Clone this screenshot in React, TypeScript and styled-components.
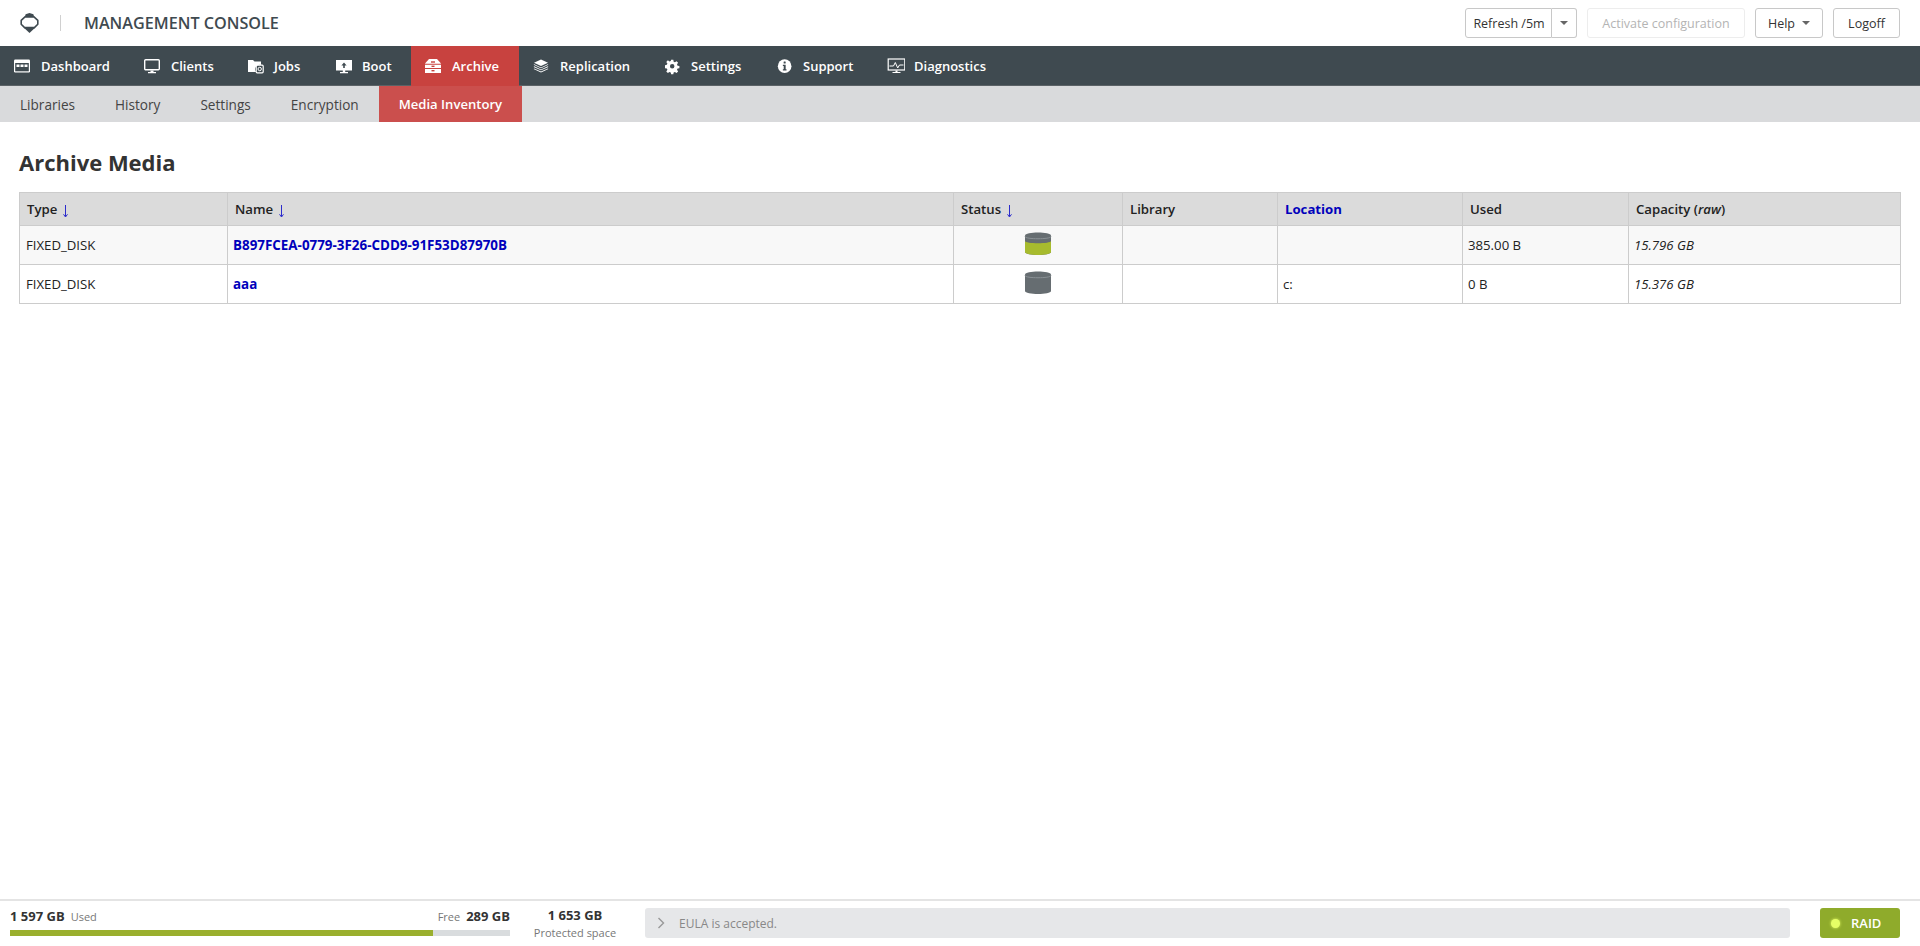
import React from "react";
import styled, { createGlobalStyle } from "styled-components";

const Global = createGlobalStyle`
  html, body { margin: 0; padding: 0; height: 100%; background: #fff; }
  #root { height: 100%; }
  * { box-sizing: border-box; }
`;

const Page = styled.div`
  height: 946px;
  display: flex;
  flex-direction: column;
  font-family: "Open Sans", "Liberation Sans", sans-serif;
  color: #333;
  overflow: hidden;
`;

const TopBar = styled.header`
  height: 46px;
  flex: none;
  display: flex;
  align-items: center;
  justify-content: space-between;
  padding: 0 20px 0 20px;
  background: #fff;
`;

const Brand = styled.div`
  display: flex;
  align-items: center;
`;

const Divider = styled.span`
  width: 1px;
  height: 16px;
  background: #d0d0d0;
  margin: 0 23px 0 21px;
`;

const Title = styled.span`
  font-size: 16.2px;
  font-weight: 600;
  color: #3f4a50;
  white-space: nowrap;
`;

const Actions = styled.div`
  display: flex;
  gap: 10px;
`;

const Button = styled.button<{ $disabled?: boolean; $w?: number }>`
  width: ${(p) => (p.$w ? `${p.$w}px` : "auto")};
  height: 30px;
  display: flex;
  align-items: center;
  justify-content: center;
  gap: 7px;
  padding: 0;
  background: #fff;
  border: 1px solid ${(p) => (p.$disabled ? "#ededed" : "#c8c8c8")};
  border-radius: 3px;
  font: 400 12.5px "Open Sans", sans-serif;
  color: ${(p) => (p.$disabled ? "#b4b4b4" : "#333")};
  white-space: nowrap;
`;

const SplitGroup = styled.div`
  display: flex;
`;

const SplitMain = styled(Button)`
  padding-left: 1px;
  border-radius: 3px 0 0 3px;
  border-right: 1px solid #c8c8c8;
`;

const SplitCaret = styled(Button)`
  border-left: 0;
  border-radius: 0 3px 3px 0;
`;

const Caret = styled.i`
  display: block;
  width: 0;
  height: 0;
  border-left: 4px solid transparent;
  border-right: 4px solid transparent;
  border-top: 4px solid #666;
`;

const MainNav = styled.nav`
  height: 40px;
  flex: none;
  display: flex;
  background: #3f4a50;
  box-shadow: inset 0 -1px 0 #5b6266;
`;

const NavItem = styled.a<{ $active?: boolean; $w: number }>`
  width: ${(p) => p.$w}px;
  flex: none;
  display: flex;
  align-items: center;
  padding-left: 14px;
  background: ${(p) => (p.$active ? "#c8423f" : "transparent")};
  color: #fff;
  font-size: 13px;
  font-weight: 600;
  white-space: nowrap;
`;

const NavIcon = styled.svg`
  width: 18px;
  height: 18px;
  flex: none;
  fill: none;
  margin-right: 9px;
`;

const SubNav = styled.nav`
  height: 36px;
  flex: none;
  display: flex;
  background: #d9dadc;
`;

const SubItem = styled.a<{ $active?: boolean }>`
  display: flex;
  align-items: center;
  padding: 0 20px;
  background: ${(p) => (p.$active ? "#cb4f4d" : "transparent")};
  color: ${(p) => (p.$active ? "#fff" : "#444")};
  font-size: ${(p) => (p.$active ? 13.1 : 13.6)}px;
  font-weight: ${(p) => (p.$active ? 600 : 400)};
  white-space: nowrap;
`;

const Main = styled.main`
  flex: 1;
  padding: 26px 19px 0;
`;

const Heading = styled.h1`
  margin: 0 0 16px;
  font-size: 22px;
  line-height: 28px;
  font-weight: 700;
  color: #333;
`;

const Table = styled.table`
  width: 1882px;
  border-collapse: collapse;
  table-layout: fixed;
  font-size: 13.2px;
  color: #222;
  border: 1px solid #ccc;
`;

const Th = styled.th`
  height: 33px;
  padding: 0 7px;
  background: #dbdbdb;
  border: 1px solid #ccc;
  text-align: left;
  font-weight: 600;
  color: #222;
`;

const ThLink = styled.span`
  color: #0000bb;
  font-weight: 700;
`;

const SortArrow = styled.svg`
  display: inline-block;
  width: 7px;
  height: 14px;
  margin-left: 1px;
  vertical-align: -4px;
`;

const Tr = styled.tr<{ $shade?: boolean }>`
  background: ${(p) => (p.$shade ? "#f8f8f8" : "#fff")};
`;

const Td = styled.td<{ $center?: boolean; $italic?: boolean }>`
  height: 39px;
  padding: 0 5px;
  border: 1px solid #ccc;
  text-align: ${(p) => (p.$center ? "center" : "left")};
  font-style: ${(p) => (p.$italic ? "italic" : "normal")};
  vertical-align: middle;
  &:first-child {
    padding-left: 6px;
  }
`;

const NameLink = styled.a`
  color: #0000bb;
  font-weight: 700;
  font-size: 13.4px;
`;

const DiskSvg = styled.svg`
  display: block;
  margin: -3px auto 0;
  width: 28px;
  height: 24px;
`;

const Footer = styled.footer`
  height: 47px;
  flex: none;
  display: flex;
  align-items: stretch;
  padding: 0 19px 0 10px;
  border-top: 2px solid #e4e4e4;
  background: #fff;
`;

const Usage = styled.div`
  width: 500px;
  flex: none;
  display: flex;
  flex-direction: column;
  margin-right: 15px;
`;

const UsageRow = styled.div`
  height: 29px;
  display: flex;
  align-items: center;
  justify-content: space-between;
`;

const UsagePart = styled.span`
  display: flex;
  align-items: baseline;
  gap: 6px;
`;

const Strong = styled.b`
  font-size: 13px;
  font-weight: 700;
  color: #333;
`;

const Muted = styled.span`
  font-size: 11px;
  color: #777;
`;

const Bar = styled.div`
  height: 6px;
  background: #d9dcde;
`;

const BarFill = styled.div`
  height: 100%;
  background: #9aaf2e;
`;

const Protected = styled.div`
  width: 100px;
  flex: none;
  display: flex;
  flex-direction: column;
  align-items: center;
  padding-top: 6px;
  margin-right: 20px;
  line-height: 17px;
`;

const Message = styled.div`
  width: 1145px;
  height: 30px;
  margin: 7px 30px 0 0;
  flex: none;
  display: flex;
  align-items: center;
  gap: 14px;
  padding-left: 12px;
  background: #e6e7e9;
  border-radius: 3px;
  font-size: 12px;
  color: #888;
`;

const Raid = styled.div`
  width: 80px;
  height: 30px;
  margin-top: 7px;
  flex: none;
  display: flex;
  align-items: center;
  gap: 11px;
  padding-left: 11px;
  background: #8fab2b;
  border-radius: 3px;
  font-size: 13px;
  font-weight: 600;
  color: #fff;
`;

const Led = styled.i`
  display: block;
  width: 9px;
  height: 9px;
  border-radius: 50%;
  background: #e6ff66;
  box-shadow: 0 0 3px #e6ff66;
`;

const Logo = () => (
  <svg width="19" height="20" viewBox="0 0 19 20">
    <path d="M4.6 4.5L5.6 1.2 9.5 0 13.4 1.2 14.4 4.5z" fill="#3f4a50" />
    <path
      d="M5 3.9H14L17.8 7.4V11.2L14.4 14.6H4.6L1.2 11.2V7.4Z"
      fill="#fff"
      stroke="#3f4a50"
      strokeWidth="1.6"
      strokeLinejoin="round"
    />
    <path d="M4.2 15H14.8L9.5 20z" fill="#3f4a50" />
  </svg>
);

const Arrow = () => (
  <SortArrow viewBox="0 0 7 14">
    <path d="M3.5 1V12.5M1.5 10.3L3.5 13 5.5 10.3" fill="none" stroke="#2c2ccc" strokeWidth="1" />
  </SortArrow>
);

const icons: Record<string, React.ReactNode> = {
  dashboard: (
    <g transform="translate(-1 0)">
      <rect x="1" y="2.5" width="16" height="13" rx="1.2" fill="#fff" />
      <rect x="2.2" y="6" width="13.6" height="8.3" fill="#3f4a50" />
      <rect x="3.5" y="7.5" width="3" height="2.5" fill="#fff" />
      <rect x="7.5" y="7.5" width="3" height="2.5" fill="#fff" />
      <rect x="11.5" y="7.5" width="3" height="2.5" fill="#fff" />
    </g>
  ),
  clients: (
    <g transform="translate(-1 0)">
      <rect x="1.7" y="2.7" width="14.6" height="10" rx="1" stroke="#fff" strokeWidth="1.4" />
      <path d="M7.5 13.5h3v1.5h2.5v1.2H5V15h2.5z" fill="#fff" />
    </g>
  ),
  jobs: (
    <>
      <path d="M1 3h5l1.5 1.5H14V8a4.5 4.5 0 0 0-5 7H1z" fill="#fff" />
      <rect x="9.2" y="8.2" width="7" height="7.6" rx="1" stroke="#fff" strokeWidth="1.2" />
      <circle cx="12.7" cy="12" r="1.7" stroke="#fff" strokeWidth="1" />
    </>
  ),
  boot: (
    <>
      <path d="M1 3h16v10.5H10.2V15H13v1.2H5V15h2.8v-1.5H1z" fill="#fff" />
      <path d="M9 5.5l2.6 3H9.8v2.6H8.2V8.5H6.4z" fill="#3f4a50" />
    </>
  ),
  archive: (
    <g transform="translate(-1 0)">
      <path d="M5 2h8l4 4.5V16H1V6.5z" fill="#fff" />
      <path d="M1 7.2h16M1 11.5h16" stroke="#c8423f" strokeWidth="1.1" />
      <rect x="7" y="4.3" width="4" height="1.4" fill="#c8423f" />
      <rect x="7.5" y="8.6" width="3" height="1.4" fill="#c8423f" />
      <rect x="7.5" y="13" width="3" height="1.4" fill="#c8423f" />
    </g>
  ),
  replication: (
    <g transform="translate(-1 0)">
      <path d="M9 2.5l7 3.3-7 3.3-7-3.3z" fill="#fff" />
      <path d="M2.2 7.2L9 10.4l6.8-3.2.6.6L9 11.2 1.6 7.8zM2.2 9.3L9 12.5l6.8-3.2.6.6L9 13.3 1.6 9.9zM2.2 11.4L9 14.6l6.8-3.2.6.6L9 15.6 1.6 12z" fill="#fff" />
    </g>
  ),
  settings: (
    <g transform="translate(1 2) scale(0.8)">
      <path
        fillRule="evenodd"
        d="M7.6 1h2.8l.4 2.4 1.6.7 2-1.4 2 2-1.4 2 .7 1.6 2.3.4v2.8l-2.3.4-.7 1.6 1.4 2-2 2-2-1.4-1.6.7-.4 2.3H7.6l-.4-2.3-1.6-.7-2 1.4-2-2 1.4-2-.7-1.6-2.3-.4V7.7l2.3-.4.7-1.6-1.4-2 2-2 2 1.4 1.6-.7zM9 6.2a2.8 2.8 0 1 0 0 5.6 2.8 2.8 0 0 0 0-5.6z"
        fill="#fff"
      />
    </g>
  ),
  support: (
    <g transform="translate(1 1.5) scale(0.85)">
      <circle cx="9" cy="9" r="8" fill="#fff" />
      <rect x="7.8" y="3.6" width="2.4" height="2.4" rx="0.6" fill="#3f4a50" />
      <path d="M6.9 7.4h3.3v5.2h1v1.5H6.9v-1.5h1V8.9h-1z" fill="#3f4a50" />
    </g>
  ),
  diagnostics: (
    <g transform="translate(0.5 0)">
      <rect x="0.7" y="2" width="16.6" height="11" stroke="#fff" strokeWidth="1.2" />
      <path d="M2 9h4l1.8-3.5 2.4 5.5L12 8h4" stroke="#fff" strokeWidth="1" />
      <path d="M8 13.5h2v1.5h3v1H5v-1h3z" fill="#fff" />
    </g>
  ),
};

const nav = [
  ["Dashboard", "dashboard", 130],
  ["Clients", "clients", 103],
  ["Jobs", "jobs", 88],
  ["Boot", "boot", 90],
  ["Archive", "archive", 108],
  ["Replication", "replication", 131],
  ["Settings", "settings", 112],
  ["Support", "support", 111],
  ["Diagnostics", "diagnostics", 130],
] as const;

const Disk = ({ filled }: { filled?: boolean }) => (
  <DiskSvg viewBox="0 0 28 24">
    <path d="M1 3.5C1 -0.5 27 -0.5 27 3.5V20C27 24 1 24 1 20Z" fill="#666d71" />
    {filled && <path d="M1 9C1 12 27 12 27 9V20C27 24 1 24 1 20Z" fill="#a7bb2e" />}
    <path d="M1 4.5C1 7.5 27 7.5 27 4.5" fill="none" stroke="#8a9195" strokeWidth="1" />
  </DiskSvg>
);

const cols = [208, 726, 169, 155, 185, 166, 272];

export default function App() {
  return (
    <Page>
      <Global />
      <TopBar>
        <Brand>
          <Logo />
          <Divider />
          <Title>MANAGEMENT CONSOLE</Title>
        </Brand>
        <Actions>
          <SplitGroup>
            <SplitMain $w={87}>Refresh /5m</SplitMain>
            <SplitCaret $w={25}>
              <Caret />
            </SplitCaret>
          </SplitGroup>
          <Button $disabled $w={158}>Activate configuration</Button>
          <Button $w={68}>
            Help <Caret />
          </Button>
          <Button $w={67}>Logoff</Button>
        </Actions>
      </TopBar>
      <MainNav>
        {nav.map(([label, icon, w]) => (
          <NavItem key={label} $w={w} $active={label === "Archive"}>
            <NavIcon viewBox="0 0 18 18">{icons[icon]}</NavIcon>
            {label}
          </NavItem>
        ))}
      </MainNav>
      <SubNav>
        <SubItem>Libraries</SubItem>
        <SubItem>History</SubItem>
        <SubItem>Settings</SubItem>
        <SubItem>Encryption</SubItem>
        <SubItem $active>Media Inventory</SubItem>
      </SubNav>
      <Main>
        <Heading>Archive Media</Heading>
        <Table>
          <colgroup>
            {cols.map((w, i) => (
              <col key={i} width={w} />
            ))}
          </colgroup>
          <thead>
            <tr>
              <Th>Type <Arrow /></Th>
              <Th>Name <Arrow /></Th>
              <Th>Status <Arrow /></Th>
              <Th>Library</Th>
              <Th><ThLink>Location</ThLink></Th>
              <Th>Used</Th>
              <Th>Capacity (<i>raw</i>)</Th>
            </tr>
          </thead>
          <tbody>
            <Tr $shade>
              <Td>FIXED_DISK</Td>
              <Td><NameLink>B897FCEA-0779-3F26-CDD9-91F53D87970B</NameLink></Td>
              <Td $center><Disk filled /></Td>
              <Td />
              <Td />
              <Td>385.00 B</Td>
              <Td $italic>15.796 GB</Td>
            </Tr>
            <Tr>
              <Td>FIXED_DISK</Td>
              <Td><NameLink>aaa</NameLink></Td>
              <Td $center><Disk /></Td>
              <Td />
              <Td>c:</Td>
              <Td>0 B</Td>
              <Td $italic>15.376 GB</Td>
            </Tr>
          </tbody>
        </Table>
      </Main>
      <Footer>
        <Usage>
          <UsageRow>
            <UsagePart><Strong>1 597 GB</Strong><Muted>Used</Muted></UsagePart>
            <UsagePart><Muted>Free</Muted><Strong>289 GB</Strong></UsagePart>
          </UsageRow>
          <Bar><BarFill style={{ width: `${(423 / 500) * 100}%` }} /></Bar>
        </Usage>
        <Protected>
          <Strong>1 653 GB</Strong>
          <Muted>Protected space</Muted>
        </Protected>
        <Message>
          <svg width="8" height="12" viewBox="0 0 8 12"><path d="M1.5 1l5 5-5 5" fill="none" stroke="#999" strokeWidth="1.4" /></svg>
          EULA is accepted.
        </Message>
        <Raid><Led />RAID</Raid>
      </Footer>
    </Page>
  );
}
